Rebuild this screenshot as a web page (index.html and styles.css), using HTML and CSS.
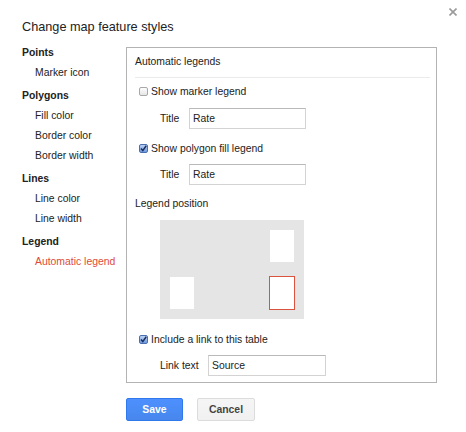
FILE: index.html
```html
<!DOCTYPE html>
<html lang="en">
<head>
    <meta charset="UTF-8">
    <title>Change map feature styles</title>
    <link rel="stylesheet" href="styles.css">
</head>
<body>
<div class="dialog">
    <div class="close">
        <svg width="8" height="8" viewBox="0 0 8 8"><path d="M0.5 0.5L7.5 7.5M7.5 0.5L0.5 7.5" stroke="#9a9a9a" stroke-width="1.6"/></svg>
    </div>
    <div class="header">Change map feature styles</div>

    <div class="main">
        <div class="sidebar">
            <div class="group">Points</div>
            <div class="item">Marker icon</div>
            <div class="group">Polygons</div>
            <div class="item">Fill color</div>
            <div class="item">Border color</div>
            <div class="item">Border width</div>
            <div class="group">Lines</div>
            <div class="item">Line color</div>
            <div class="item">Line width</div>
            <div class="group">Legend</div>
            <div class="item active">Automatic legend</div>
        </div>

        <div class="content">
            <div class="panel">
                <div class="panel-title">Automatic legends</div>

                <div class="check-row first">
                    <span class="check"></span>
                    <span>Show marker legend</span>
                </div>
                <div class="field">
                    <label class="label-title">Title</label>
                    <input type="text" class="text title-input" value="Rate">
                </div>

                <div class="check-row gap">
                    <span class="check checked">
                        <svg width="9" height="9" viewBox="0 0 9 9"><path d="M2 4.6L3.8 6.6L7.2 1.8" fill="none" stroke="#1b2d5c" stroke-width="1.5"/></svg>
                    </span>
                    <span>Show polygon fill legend</span>
                </div>
                <div class="field tight">
                    <label class="label-title">Title</label>
                    <input type="text" class="text title-input" value="Rate">
                </div>

                <div class="section">Legend position</div>
                <div class="position">
                    <div class="slot hidden"></div>
                    <div class="slot"></div>
                    <div class="slot"></div>
                    <div class="slot selected"></div>
                </div>

                <div class="check-row link">
                    <span class="check checked">
                        <svg width="9" height="9" viewBox="0 0 9 9"><path d="M2 4.6L3.8 6.6L7.2 1.8" fill="none" stroke="#1b2d5c" stroke-width="1.5"/></svg>
                    </span>
                    <span>Include a link to this table</span>
                </div>
                <div class="field tight">
                    <label class="label-link">Link text</label>
                    <input type="text" class="text link-input" value="Source">
                </div>
            </div>

            <div class="buttons">
                <button class="button save">Save</button>
                <button class="button cancel">Cancel</button>
            </div>
        </div>
    </div>
</div>
</body>
</html>
```

FILE: styles.css
```css
body {
    margin: 0;
    font-family: "Liberation Sans", Arial, sans-serif;
    font-size: 10.4px;
    color: #222;
    background: #fff;
}

.dialog {
    position: relative;
    padding: 0 0 0 22px;
}

.header {
    padding-top: 19px;
    font-size: 12.7px;
    line-height: 16px;
    color: #222;
}

.close {
    position: absolute;
    top: 8px;
    left: 449px;
    width: 8px;
    height: 8px;
    line-height: 0;
}

.main {
    display: flex;
    align-items: flex-start;
}

.sidebar {
    width: 104px;
    padding-top: 8px;
    line-height: 20px;
}

.group {
    font-weight: bold;
    margin-top: 3px;
}

.group:first-child {
    margin-top: 0;
}

.item {
    padding-left: 13px;
}

.item.active {
    color: #dd4b39;
}

.content {
    margin-top: 12px;
}

.panel {
    box-sizing: border-box;
    width: 311px;
    border: 1px solid #b3b3b3;
    padding: 0 6px 6px 8px;
}

.panel-title {
    line-height: 20px;
    padding: 4px 0 5px;
    border-bottom: 1px solid #ebebeb;
}

.check-row {
    display: flex;
    align-items: center;
    height: 20px;
    margin-top: 9px;
}

.check-row.first {
    margin-top: 3px;
}

.check-row.link {
    margin-top: 10px;
}

.check {
    box-sizing: border-box;
    width: 9px;
    height: 9px;
    margin: 1px 3px 0 4px;
    border: 1px solid #a8a8a8;
    border-radius: 2px;
    background: linear-gradient(#fdfdfd, #e6e6e6);
    line-height: 0;
    position: relative;
}

.check.checked {
    border-color: #4a6fb0;
    background: linear-gradient(#b9d0f2, #6f9be0);
}

.check svg {
    position: absolute;
    top: -1px;
    left: -1px;
}

.field {
    display: flex;
    align-items: center;
    margin-top: 7px;
    padding-left: 25px;
}

.field.tight {
    margin-top: 6px;
}

.label-title {
    width: 29px;
}

.label-link {
    width: 48px;
}

.text {
    box-sizing: border-box;
    height: 21px;
    margin: 0;
    padding: 0 3px;
    border: 1px solid #d3d3d3;
    border-top-color: #b9b9b9;
    border-radius: 0;
    font-family: "Liberation Sans", Arial, sans-serif;
    font-size: 10.4px;
    color: #222;
}

.title-input {
    width: 117px;
}

.link-input {
    width: 118px;
}

.section {
    line-height: 20px;
    margin-top: 9px;
}

.position {
    box-sizing: border-box;
    width: 144px;
    height: 99px;
    margin: 6px 0 0 25px;
    padding: 10px;
    background: #e5e5e5;
    display: grid;
    grid-template-columns: 24px 24px;
    grid-template-rows: 32px 32px;
    justify-content: space-between;
    row-gap: 15px;
}

.slot {
    background: #fff;
}

.slot.hidden {
    visibility: hidden;
}

.slot.selected {
    outline: 1px solid #d9533f;
}

.buttons {
    display: flex;
    gap: 14px;
    margin-top: 15px;
}

.button {
    box-sizing: border-box;
    height: 23px;
    padding: 0;
    border-radius: 2px;
    font-family: "Liberation Sans", Arial, sans-serif;
    font-size: 10.4px;
    font-weight: bold;
    cursor: pointer;
}

.save {
    width: 57px;
    color: #fff;
    background: linear-gradient(#4d90fe, #4787ed);
    border: 1px solid #3079ed;
}

.cancel {
    width: 58px;
    color: #444;
    background: linear-gradient(#f5f5f5, #f1f1f1);
    border: 1px solid #dcdcdc;
}
```
